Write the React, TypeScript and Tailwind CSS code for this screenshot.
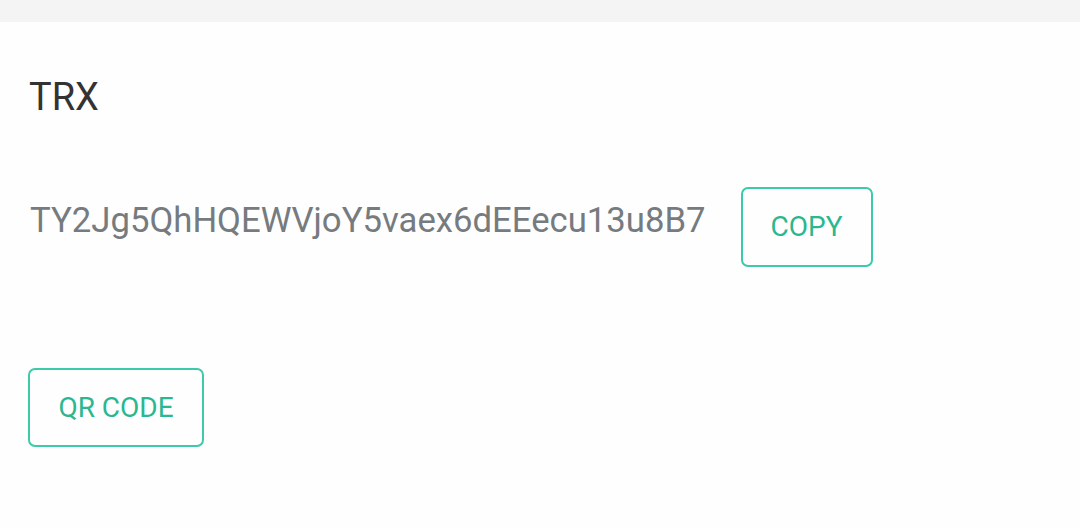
import React from 'react';

const App: React.FC = () => {
  const address = 'TY2Jg5QhHQEWVjoY5vaex6dEEecu13u8B7';

  return (
    <div className="w-[1080px] h-[528px] bg-[#fefefe] font-['Roboto',sans-serif] overflow-hidden">
      <div className="h-[22px] bg-[#f4f4f4]" />
      <div className="px-[30px]">
        <h2 className="mt-[50px] -ml-[1px] text-[38px] leading-[50px] text-[#333333]">TRX</h2>
        <div className="mt-[65px] flex items-start">
          <p className="mt-[8px] text-[34.7px] leading-[50px] text-[#767b7f]">{address}</p>
          <button className="ml-[35px] w-[132px] h-[80px] rounded-[7px] border-2 border-[#3ccaa8] text-[28px] text-[#2bb78f]">
            COPY
          </button>
        </div>
        <button className="mt-[101px] -ml-[2px] w-[176px] h-[79px] rounded-[7px] border-2 border-[#3ccaa8] text-[28px] text-[#2bb78f]">
          QR CODE
        </button>
      </div>
    </div>
  );
};

export default App;
